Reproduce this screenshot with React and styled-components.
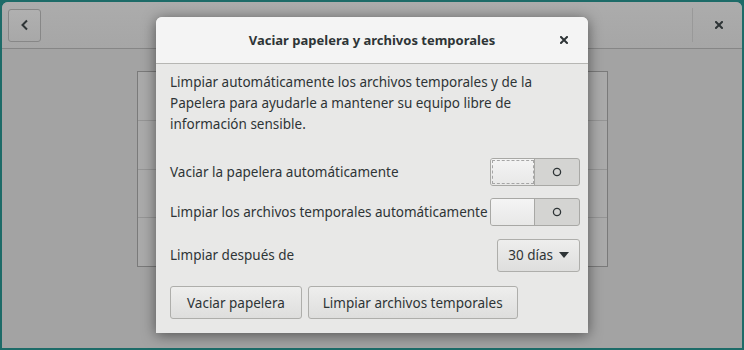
import React from 'react';
import styled, { createGlobalStyle } from 'styled-components';

const GlobalStyle = createGlobalStyle`
  html, body { margin: 0; padding: 0; }
  body {
    width: 744px;
    height: 350px;
    overflow: hidden;
    background: #1d6b68;
    font-family: "Noto Sans", "DejaVu Sans", sans-serif;
    font-size: 14px;
    color: #2e3436;
  }
`;

const Screen = styled.div`
  position: relative;
  width: 744px;
  height: 350px;
  padding: 2px;
  box-sizing: border-box;
`;

const Window = styled.div`
  height: 100%;
  display: flex;
  flex-direction: column;
  background: #a3a3a3;
  border-radius: 6px 6px 0 0;
  overflow: hidden;
`;

const HeaderBar = styled.div`
  height: 46px;
  flex: none;
  display: flex;
  align-items: center;
  padding: 0 6px;
  background: linear-gradient(#acacac, #a6a6a6);
  border-bottom: 1px solid #868686;
  box-sizing: content-box;
`;

const BackButton = styled.div`
  width: 31px;
  height: 31px;
  border: 1px solid #878787;
  border-radius: 3px;
  background: linear-gradient(#b0b0b0, #a8a8a8);
  display: flex;
  align-items: center;
  justify-content: center;
`;

const Spacer = styled.div`
  flex: 1;
`;

const Separator = styled.div`
  width: 1px;
  height: 34px;
  background: #999;
  margin-right: 14px;
`;

const CloseGlyph = styled.div`
  width: 24px;
  display: flex;
  justify-content: center;
  margin-right: 5px;
`;

const Content = styled.div`
  flex: 1;
  display: flex;
  justify-content: center;
  padding-top: 22px;
`;

const ListBox = styled.div`
  width: 469px;
  height: 194px;
  border: 1px solid #7a7a7a;
  background: #aaaaaa;
  display: flex;
  flex-direction: column;
`;

const ListRow = styled.div`
  flex: 1;
  border-top: ${p => (p.first ? 'none' : '1px solid #959595')};
`;

const Dialog = styled.div`
  position: absolute;
  left: 156px;
  top: 17px;
  width: 432px;
  height: 316px;
  border-radius: 6px 6px 0 0;
  background: #e8e8e7;
  box-shadow: 0 2px 14px rgba(0, 0, 0, 0.5);
  display: flex;
  flex-direction: column;
  overflow: hidden;
`;

const DialogHeader = styled.div`
  height: 46px;
  flex: none;
  display: flex;
  align-items: center;
  justify-content: center;
  position: relative;
  background: #f4f4f4;
  border-bottom: 1px solid #b6b6b3;
  font-weight: bold;
  font-size: 13px;
`;

const DialogClose = styled.div`
  position: absolute;
  right: 20px;
  top: 19px;
  display: flex;
`;

const Body = styled.div`
  flex: 1;
  display: flex;
  flex-direction: column;
  padding: 8px 8px 0 14px;
`;

const Intro = styled.p`
  margin: 0 0 17px 0;
  line-height: 21px;
  font-size: 13.5px;
`;

const Row = styled.div`
  display: flex;
  align-items: center;
  justify-content: space-between;
  height: ${p => p.h || 40}px;
  font-size: 13.5px;
`;

const Switch = styled.div`
  width: 88px;
  height: 26px;
  border: 1px solid #a8a8a5;
  border-radius: 3px;
  background: #d4d4d2;
  display: flex;
`;

const Slider = styled.div`
  width: 44px;
  height: 100%;
  box-sizing: border-box;
  background: linear-gradient(#f4f4f4, #e8e8e7);
  border-right: 1px solid #a8a8a5;
  border-radius: 2px 0 0 2px;
  outline: ${p => (p.focused ? '1px dashed #a5a5a5' : 'none')};
  outline-offset: -2px;
`;

const Off = styled.div`
  flex: 1;
  display: flex;
  align-items: center;
  justify-content: center;
`;

const Button = styled.div`
  height: 31px;
  padding: 0 ${p => p.pad || 14}px;
  border: 1px solid #aeaeab;
  border-radius: 3px;
  background: linear-gradient(#eeeeed, #dededd);
  display: flex;
  align-items: center;
  justify-content: center;
  gap: 6px;
  font-size: 13.5px;
  white-space: nowrap;
`;

const Buttons = styled.div`
  display: flex;
  gap: 6px;
  margin-top: 8px;
`;

const Cross = ({ size = 8, stroke = 2 }) => (
  <svg width={size} height={size} viewBox="0 0 8 8">
    <path d="M1 1L7 7M7 1L1 7" stroke="#2e3436" strokeWidth={stroke} strokeLinecap="square" />
  </svg>
);

const Ring = () => (
  <svg width="10" height="10" viewBox="0 0 10 10">
    <circle cx="5" cy="5" r="3.6" fill="none" stroke="#2e3436" strokeWidth="1.3" />
  </svg>
);

const Toggle = ({ focused }) => (
  <Switch>
    <Slider focused={focused} />
    <Off><Ring /></Off>
  </Switch>
);

export default function App() {
  return (
    <Screen>
      <GlobalStyle />
      <Window>
        <HeaderBar>
          <BackButton>
            <svg width="10" height="12" viewBox="0 0 10 12">
              <path d="M7 1.5L2.5 6L7 10.5" fill="none" stroke="#2e3436" strokeWidth="2" />
            </svg>
          </BackButton>
          <Spacer />
          <Separator />
          <CloseGlyph><Cross /></CloseGlyph>
        </HeaderBar>
        <Content>
          <ListBox>
            <ListRow first />
            <ListRow />
            <ListRow />
            <ListRow />
          </ListBox>
        </Content>
      </Window>

      <Dialog>
        <DialogHeader>
          Vaciar papelera y archivos temporales
          <DialogClose><Cross /></DialogClose>
        </DialogHeader>
        <Body>
          <Intro>
            Limpiar automáticamente los archivos temporales y de la Papelera para ayudarle a mantener su equipo libre de información sensible.
          </Intro>
          <Row h={40}>
            <span>Vaciar la papelera automáticamente</span>
            <Toggle focused />
          </Row>
          <Row h={40}>
            <span>Limpiar los archivos temporales automáticamente</span>
            <Toggle />
          </Row>
          <Row h={46}>
            <span>Limpiar después de</span>
            <Button pad={10}>
              30 días
              <svg width="10" height="6" viewBox="0 0 10 6">
                <path d="M0 0H10L5 6Z" fill="#2e3436" />
              </svg>
            </Button>
          </Row>
          <Buttons>
            <Button pad={16}>Vaciar papelera</Button>
            <Button pad={14}>Limpiar archivos temporales</Button>
          </Buttons>
        </Body>
      </Dialog>
    </Screen>
  );
}
